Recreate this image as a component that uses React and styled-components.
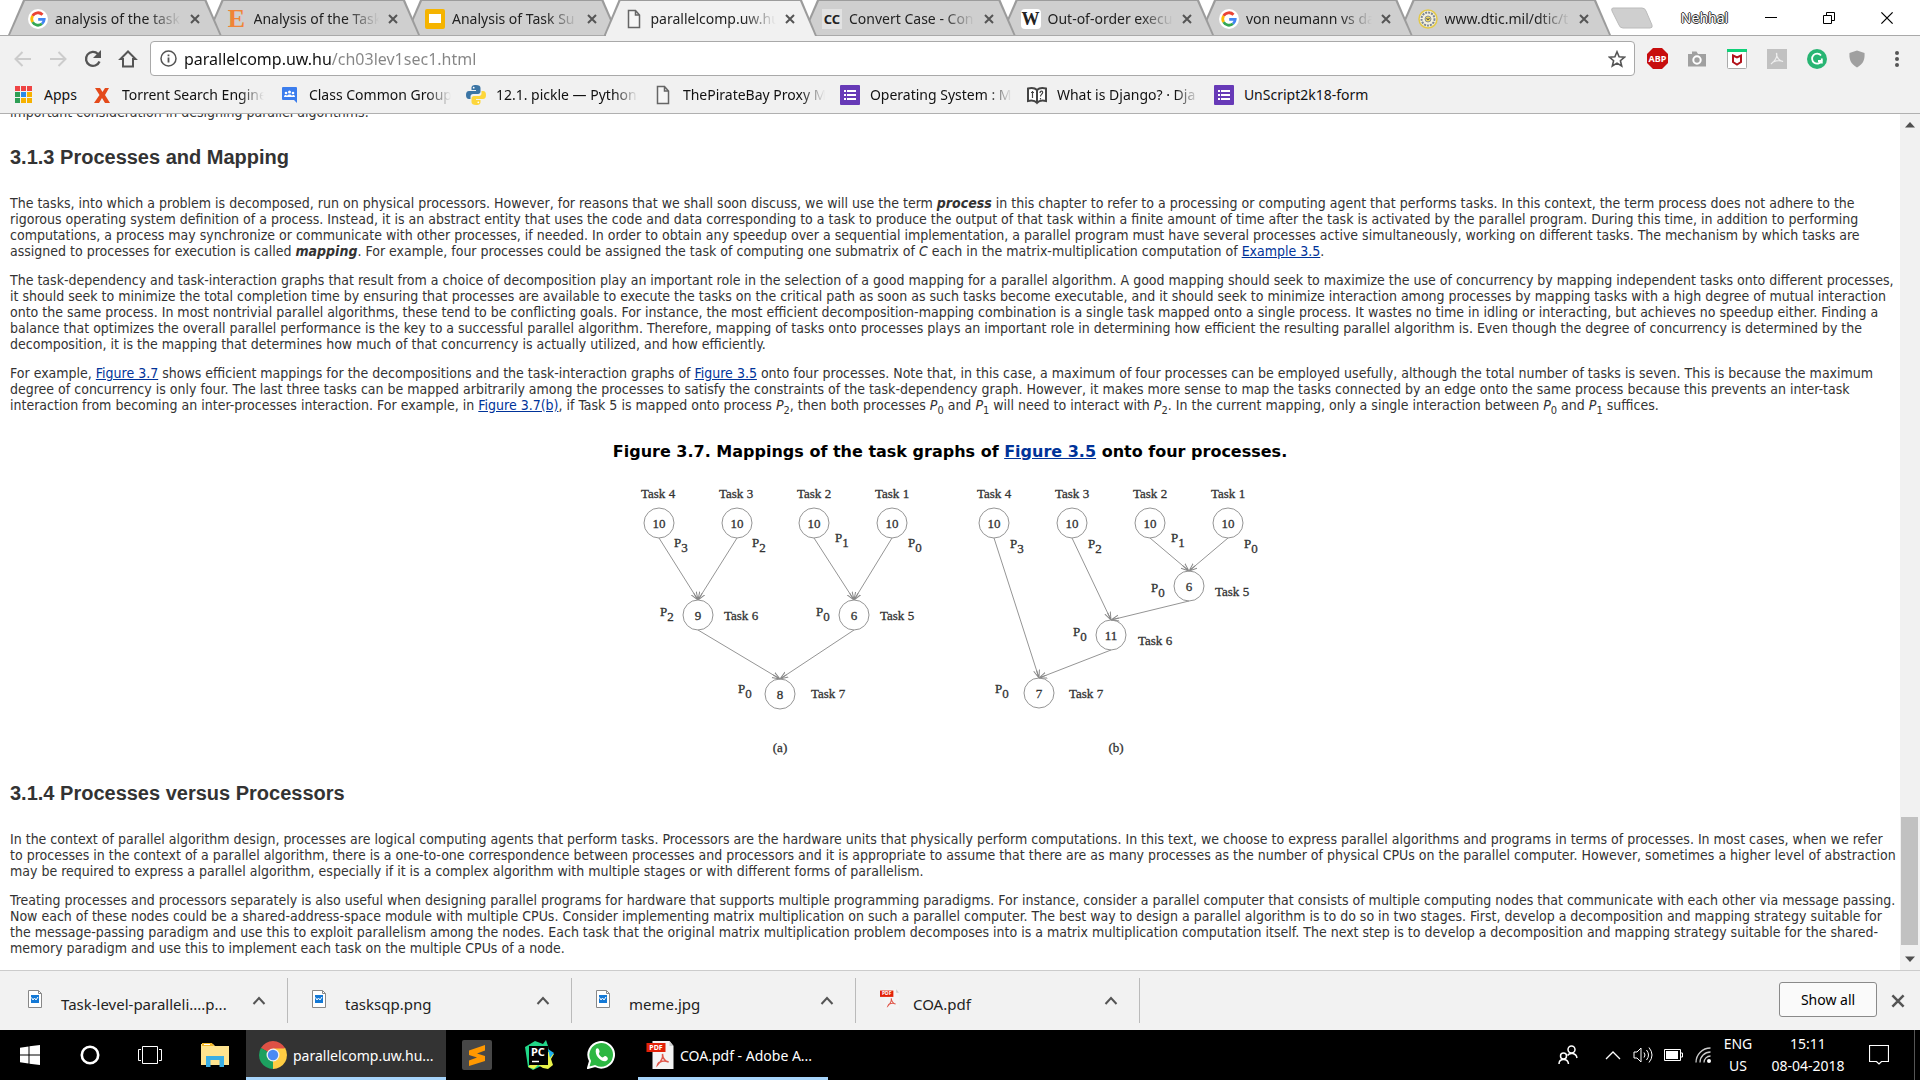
import React from "react";
import styled, { createGlobalStyle } from "styled-components";

const UI = `"Noto Sans", "Open Sans", sans-serif`;

const GlobalStyle = createGlobalStyle`
  * { box-sizing: border-box; }
  body { margin: 0; background: #fff; color: #333; font-family: ${UI}; }
  button { font: inherit; color: inherit; border: 0; padding: 0; background: none; }
  svg { display: block; flex: none; }
`;

const Screen = styled.div`
  display: flex;
  flex-direction: column;
  height: 100vh;
  overflow: hidden;
`;

/* ---------- tab strip ---------- */
const TitleBar = styled.header`
  display: flex;
  height: 36px;
  padding-left: 8px;
  background: #fff;
  border-bottom: 1px solid #a9a9a9;
`;
const TabList = styled.div`
  display: flex;
  flex: 1;
  min-width: 0;
`;
const Tab = styled.div`
  position: relative;
  z-index: ${(p) => (p.$active ? 20 : p.$level)};
  display: flex;
  flex: 1;
  align-items: center;
  gap: 7px;
  min-width: 0;
  height: ${(p) => (p.$active ? 36 : 35)}px;
  padding: 2px 20px 0;
  color: #222;
  font-size: 14px;
  & + & { margin-left: -15px; }
  &::before, &::after {
    content: "";
    position: absolute;
    z-index: -1;
    clip-path: polygon(0 100%, 15px 0, calc(100% - 15px) 0, 100% 100%);
  }
  &::before { inset: 0; background: #9c9c9c; }
  &::after { inset: 1px 2px 0; background: ${(p) => (p.$active ? "#f1f1f1" : "#cfcfcf")}; }
`;
const FadeText = styled.span`
  overflow: hidden;
  white-space: nowrap;
  mask-image: linear-gradient(90deg, #000 calc(100% - 32px), transparent);
`;
const TabTitle = styled(FadeText)`
  flex: 1;
  min-width: 0;
  height: 20px;
  line-height: 20px;
`;
const TabClose = styled.button`
  display: grid;
  place-items: center;
  width: 14px;
  height: 20px;
  color: #555;
`;
const TextBadge = styled.span`
  flex: none;
  width: 20px;
  height: 20px;
  border-radius: ${(p) => (p.$round ? 4 : 0)}px;
  background: ${(p) => p.$bg || "transparent"};
  color: ${(p) => p.$color || "#222"};
  font: ${(p) => p.$font};
  line-height: 20px;
  text-align: center;
`;
const WindowArea = styled.div`
  display: flex;
  flex: none;
  align-items: center;
  width: 309px;
  padding-right: 4px;
`;
const NewTab = styled.button`
  width: 42px;
  height: 22px;
`;
const Profile = styled.span`
  flex: 1;
  padding-left: 14px;
  color: #fff;
  font-size: 14px;
  line-height: 32px;
  text-align: center;
  text-shadow: 1px 0 #333, -1px 0 #333, 0 1px #333, 0 -1px #333;
`;
const WindowButton = styled.button`
  display: grid;
  place-items: center;
  width: 58px;
  height: 34px;
`;

/* ---------- toolbar ---------- */
const Toolbar = styled.div`
  display: flex;
  align-items: center;
  height: 44px;
  padding: 1px 3px 0 5px;
  background: #f1f1f1;
`;
const NavButton = styled.button`
  display: grid;
  place-items: center;
  width: 35px;
  height: 35px;
  color: ${(p) => (p.$off ? "#ccc" : "#555")};
`;
const AddressBox = styled.form`
  display: flex;
  flex: 1;
  align-items: center;
  gap: 7px;
  height: 35px;
  margin: 0 2px 0 5px;
  padding: 0 8px 0 9px;
  border: 1px solid #a9a9a9;
  border-radius: 4px;
  background: #fff;
  color: #555;
`;
const AddressInput = styled.input`
  flex: 1;
  min-width: 0;
  height: 30px;
  padding: 0;
  border: 0;
  outline: 0;
  background: linear-gradient(90deg, #111 148px, #858585 148px);
  background-clip: text;
  color: transparent;
  font: 16px ${UI};
`;
const ExtButton = styled.button`
  display: grid;
  place-items: center;
  width: 40px;
  height: 35px;
`;

const Bookmarks = styled.nav`
  display: flex;
  align-items: center;
  gap: 15px;
  height: 34px;
  padding: 0 15px 4px;
  border-bottom: 1px solid #b0b0b0;
  background: #f1f1f1;
`;
const Bookmark = styled.a`
  display: flex;
  flex: none;
  align-items: center;
  gap: 10px;
  color: #111;
  font-size: 14px;
  line-height: 20px;
  text-decoration: none;
`;
const AppsLink = styled(Bookmark)`
  gap: 12px;
`;
const BookmarkLabel = styled(FadeText)`
  width: ${(p) => (p.$fit ? "auto" : "142px")};
  mask-image: ${(p) => (p.$fit ? "none" : "linear-gradient(90deg, #000 calc(100% - 24px), transparent)")};
`;

/* ---------- page ---------- */
const Viewport = styled.main`
  display: flex;
  flex: 1;
  min-height: 0;
  background: #fff;
`;
const Scroller = styled.div`
  flex: 1;
  min-width: 0;
  overflow: hidden;
`;
const Article = styled.article`
  margin-top: -10px;
  padding: 0 10px;
  font: 14px/16px "DejaVu Sans Condensed", "DejaVu Sans", sans-serif;
  white-space: nowrap;
`;
const P = styled.p`
  margin: 0 0 13px;
  sub { font-size: 11px; line-height: 0; }
`;
const A = styled.a`
  color: #039;
  text-decoration: underline;
`;
const H3 = styled.h3`
  margin: 25px 0 26px;
  font: bold 20px/24px "Liberation Sans", Arial, sans-serif;
`;
const Figure = styled.figure`
  display: flex;
  flex-direction: column;
  align-items: center;
  margin: 29px 0 25px;
`;
const Caption = styled.figcaption`
  color: #000;
  font: bold 16px/20px "DejaVu Sans", Verdana, sans-serif;
`;
const Graph = styled.svg`
  fill: none;
  stroke: #959595;
  text {
    fill: #333;
    stroke: #333;
    stroke-width: 0.3px;
    font: 13px "Liberation Serif", serif;
  }
`;

const ScrollTrack = styled.div`
  display: flex;
  flex-direction: column;
  width: 20px;
  background: #f1f1f1;
`;
const ScrollButton = styled.button`
  display: grid;
  place-items: center;
  height: 22px;
`;
const ScrollSpace = styled.div`
  flex: ${(p) => p.$grow};
`;
const ScrollThumb = styled.div`
  flex: 128;
  margin: 0 2px 0 1px;
  background: #c1c1c1;
`;

/* ---------- downloads ---------- */
const Shelf = styled.section`
  display: flex;
  align-items: center;
  height: 60px;
  padding: 0 15px 0 4px;
  border-top: 1px solid #ccc;
  background: #f2f2f2;
`;
const Download = styled.div`
  display: flex;
  align-items: center;
  width: 284px;
  height: 45px;
  padding: 0 21px 0 24px;
  border-right: 1px solid #bbb;
  color: #222;
`;
const DownloadIcon = styled.span`
  width: 33px;
  padding-bottom: 3px;
`;
const DownloadName = styled.span`
  flex: 1;
  padding-top: 6px;
  font-size: 15px;
  line-height: 20px;
`;
const ShowAll = styled.button`
  width: 98px;
  height: 35px;
  margin: 0 14px 2px auto;
  border: 1px solid #8a8a8a;
  border-radius: 3px;
  background: #fafafa;
  color: #000;
  font-size: 14px;
`;

/* ---------- taskbar ---------- */
const Taskbar = styled.footer`
  display: flex;
  height: 50px;
  background: #000;
  color: #fff;
`;
const TaskIcon = styled.button`
  display: grid;
  place-items: center;
  width: ${(p) => (p.$pinned ? 62 : 60)}px;
`;
const TaskGroup = styled.div`
  display: flex;
  padding-right: ${(p) => p.$after || 0}px;
`;
const TaskWindow = styled.button`
  display: flex;
  align-items: center;
  gap: 6px;
  width: ${(p) => (p.$active ? 200 : 190)}px;
  padding: 3px 0 0 ${(p) => (p.$active ? 13 : 8)}px;
  border-bottom: 3px solid #a6d4fa;
  background: ${(p) => (p.$active ? "#333" : "#000")};
  font-size: 14px;
  white-space: nowrap;
`;
const Tray = styled.div`
  display: flex;
  align-items: center;
  margin-left: auto;
  padding-right: 20px;
`;
const TrayIcon = styled.button`
  display: grid;
  place-items: center;
  width: ${(p) => (p.$wide ? 60 : 30)}px;
  height: 50px;
`;
const TrayText = styled.div`
  width: ${(p) => (p.$wide ? 106 : 40)}px;
  padding-right: ${(p) => (p.$wide ? 6 : 0)}px;
  font-size: 14px;
  line-height: 22px;
  text-align: center;
`;
const ShowDesktop = styled.button`
  width: 6px;
  height: 50px;
  border-left: 1px solid #555;
`;

/* ---------- icons ---------- */
const Svg = ({ s = 20, w, h, box, children, ...rest }) => (
  <svg width={w || s} height={h || s} viewBox={box || `0 0 ${w || s} ${h || s}`} fill="none" aria-hidden="true" {...rest}>
    {children}
  </svg>
);
const Google = () => (
  <Svg box="0 0 20 20">
    <circle cx="10" cy="10" r="10" fill="#fff" />
    <g strokeWidth="2.8">
      <path d="M4.6 6.9A6.2 6.2 0 0 1 14.5 5.7" stroke="#ea4335" />
      <path d="M4.6 6.9a6.2 6.2 0 0 0 0 6.2" stroke="#fbbc05" />
      <path d="M4.6 13.1a6.2 6.2 0 0 0 9.4 1.7" stroke="#34a853" />
      <path d="M14 14.8a6.2 6.2 0 0 0 2.2-4.4H10.2" stroke="#4285f4" />
    </g>
  </Svg>
);
const Slides = () => (
  <Svg>
    <rect width="20" height="20" rx="2" fill="#f5b400" />
    <rect x="4" y="5" width="12" height="9" fill="#fff" />
  </Svg>
);
const PageIcon = () => (
  <Svg>
    <path d="M4.5 1.5h7l4 4.5V18.5h-11zM11.5 1.5V6h4" fill="#f6f6f6" stroke="#666" strokeWidth="1.5" />
  </Svg>
);
const Seal = () => (
  <Svg>
    <circle cx="10" cy="10" r="9" fill="#f4f0dc" stroke="#e3c94a" strokeWidth="1.5" />
    <circle cx="10" cy="10" r="6.5" stroke="#7d8797" strokeWidth="2" strokeDasharray="2 1" />
    <circle cx="10" cy="10" r="3" fill="#e8d35a" stroke="#8a9099" />
    <path d="M8.5 9l1.5 2 1.5-2" stroke="#555" />
  </Svg>
);
const Cross = ({ s = 10, c = "currentColor", t = 2 }) => (
  <Svg s={s} box="0 0 10 10"><path d="M1 1l8 8M9 1L1 9" stroke={c} strokeWidth={t} /></Svg>
);
const AppsIcon = () => (
  <Svg w={17} h={17}>
    {["#ef4444", "#ef4444", "#ef4444", "#2e9e55", "#2b8ae8", "#f6b100", "#2e9e55", "#f6b100", "#f6b100"].map((c, i) => (
      <rect key={i} x={(i % 3) * 6} y={Math.floor(i / 3) * 6} width="5" height="5" fill={c} />
    ))}
  </Svg>
);
const TorrentX = () => (
  <Svg><path d="M3 3h5l2.5 4L13 3h4l-4 7 5 8h-5l-3-5-3 5H2l5.500-8z" fill="#e4491a" /></Svg>
);
const Groups = () => (
  <Svg>
    <path d="M4 2h13a1 1 0 0 1 1 1v15l-3-3H4a1 1 0 0 1-1-1V3a1 1 0 0 1 1-1z" fill="#3b7ded" />
    <g fill="#fff"><circle cx="7" cy="8" r="1.3" /><circle cx="10.5" cy="7" r="1.5" /><circle cx="14" cy="8" r="1.3" /><path d="M5 12c0-3 3-2 3-1 .5-2 4.500-2 5 0 0-1 3-2 3 1z" /></g>
  </Svg>
);
const Python = () => (
  <Svg>
    <path d="M10 0C6 0 5.500 1.500 5.500 3v2H10v1H3C1 6 0 7.500 0 10s1 4 3 4h1.500v-2.500c0-1.500 1-2.500 2.500-2.500h5c1.500 0 2.500-1 2.500-2.500V3c0-2-1.500-3-4.500-3z" fill="#3b75a5" />
    <path d="M10 20c4 0 4.500-1.500 4.500-3v-2H10v-1h7c2 0 3-1.500 3-4s-1-4-3-4h-1.500v2.500c0 1.500-1 2.500-2.500 2.500H8c-1.500 0-2.500 1-2.500 2.500V17c0 2 1.500 3 4.500 3z" fill="#fdd63b" />
    <circle cx="7.7" cy="2.7" r=".9" fill="#fff" /><circle cx="12.3" cy="17.3" r=".9" fill="#fff" />
  </Svg>
);
const Forms = () => (
  <Svg>
    <rect width="20" height="20" rx="1" fill="#673ab7" />
    <path d="M4 6h2M4 10h2M4 14h2M7 6h9M7 10h9M7 14h9" stroke="#fff" strokeWidth="2" />
  </Svg>
);
const Book = () => (
  <Svg>
    <path d="M1 3.500c4-1 7-.5 9 1.500 2-2 5-2.500 9-1.500V16c-4-1-7-.5-9 2-2-2.500-5-3-9-2zM10 5v12" stroke="#444" strokeWidth="2" fill="#fff" />
    <path d="M5.500 6v7M4 7.500h3M13 8c0-3 3.500-2 2.500 0-.5 1.500-2 1.500-2 3.500M13.500 13v1.500" stroke="#444" strokeWidth="1.2" />
  </Svg>
);
const FileImage = () => (
  <Svg w={14} h={18}>
    <path d="M.5.5h10l3 3v14H.5z" fill="#fff" stroke="#888" />
    <path d="M10.5.5v3h3" stroke="#888" />
    <rect x="3" y="5" width="8" height="8" fill="#1479d6" />
    <path d="M3.500 7.500l1.500 2.500 1.500-2 1.500 2 2-3" stroke="#fff" />
  </Svg>
);
const Pdf = ({ w = 20, h = 20 }) => (
  <Svg w={w} h={h} box="0 0 27 28">
    <path d="M6 0h17l4 5v23H6z" fill="#f4f4f4" />
    <path d="M23 0v5h4z" fill="#ccc" />
    <rect y="2" width="19" height="9" fill="#e32108" />
    <text x="9.5" y="9" fontSize="7" fontWeight="bold" fill="#fff" textAnchor="middle" fontFamily="Noto Sans, sans-serif">PDF</text>
    <path d="M16 13c1 5-3 9-5 11 1-4 7-5 11-3-3 0-6-4-6-8z" stroke="#e0574a" strokeWidth="1.5" />
  </Svg>
);
const Chrome = () => (
  <Svg s={28}>
    <path d="M14 14L1.900 7A14 14 0 0 1 26.100 7z" fill="#de5145" />
    <path d="M14 14L26.100 7A14 14 0 0 1 14 28z" fill="#ffcd43" />
    <path d="M14 14v14A14 14 0 0 1 1.900 7z" fill="#1da160" />
    <path d="M14 7.500h12.400L19.600 17.300 14 28l5.600-10.700z" fill="#ffcd43" />
    <path d="M14 28l5.600-10.700H14z" fill="#ffcd43" />
    <path d="M1.900 7l6.500 10.300L14 14z" fill="#1da160" />
    <circle cx="14" cy="14" r="6.5" fill="#f1f1f1" />
    <circle cx="14" cy="14" r="5.2" fill="#4a8af4" />
  </Svg>
);

/* ---------- data ---------- */
const badge = {
  etsy: <TextBadge $color="#f08436" $font={`bold 26px "Liberation Serif", serif`}>E</TextBadge>,
  cc: <TextBadge $bg="#e2e2e2" $font={`bold 13px ${UI}`}>CC</TextBadge>,
  wiki: <TextBadge $round $bg="#fff" $font={`bold 18px "Liberation Serif", serif`}>W</TextBadge>,
};
const TABS = [
  { title: "analysis of the task", icon: <Google /> },
  { title: "Analysis of the Task", icon: badge.etsy },
  { title: "Analysis of Task Su", icon: <Slides /> },
  { title: "parallelcomp.uw.hu", icon: <PageIcon />, active: true },
  { title: "Convert Case - Con", icon: badge.cc },
  { title: "Out-of-order execu", icon: badge.wiki },
  { title: "von neumann vs da", icon: <Google /> },
  { title: "www.dtic.mil/dtic/t", icon: <Seal /> },
];
const BOOKMARKS = [
  ["Torrent Search Engine", <TorrentX />],
  ["Class Common Group", <Groups />],
  ["12.1. pickle — Python", <Python />],
  ["ThePirateBay Proxy M", <PageIcon />],
  ["Operating System : M", <Forms />],
  ["What is Django? · Dja", <Book />],
];
const DOWNLOADS = [
  ["Task-level-paralleli....p...", <FileImage />],
  ["tasksqp.png", <FileImage />],
  ["meme.jpg", <FileImage />],
  ["COA.pdf", <Pdf w={19} h={20} />],
];

const NODES = [
  [659, 523, "10"], [737, 523, "10"], [814, 523, "10"], [892, 523, "10"],
  [698, 615, "9"], [854, 615, "6"], [780, 694, "8"],
  [994, 523, "10"], [1072, 523, "10"], [1150, 523, "10"], [1228, 523, "10"],
  [1189, 586, "6"], [1111, 635, "11"], [1039, 693, "7"],
];
const EDGES = [[0, 4], [1, 4], [2, 5], [3, 5], [4, 6], [5, 6], [9, 11], [10, 11], [8, 12], [11, 12], [7, 13], [12, 13]];
const TASKS = [
  [641, 498, 4], [719, 498, 3], [797, 498, 2], [875, 498, 1], [724, 620, 6], [880, 620, 5], [811, 698, 7],
  [977, 498, 4], [1055, 498, 3], [1133, 498, 2], [1211, 498, 1], [1215, 596, 5], [1138, 645, 6], [1069, 698, 7],
];
const PROCS = [
  [674, 547, 3], [752, 547, 2], [835, 542, 1], [908, 547, 0], [660, 616, 2], [816, 616, 0], [738, 693, 0],
  [1010, 548, 3], [1088, 548, 2], [1171, 542, 1], [1244, 548, 0], [1151, 592, 0], [1073, 636, 0], [995, 693, 0],
];

const TaskGraph = () => (
  <Graph width="640" height="294" viewBox="630 462 640 294" role="img">
    <defs>
      <marker id="tip" viewBox="0 0 8 8" refX="8" refY="4" markerWidth="8" markerHeight="8" orient="auto">
        <path d="M0 1L8 4L0 7M0 4h8" fill="none" stroke="#888" />
      </marker>
    </defs>
    {EDGES.map(([a, b]) => (
      <line key={`${a}-${b}`} x1={NODES[a][0]} y1={NODES[a][1] + 15} x2={NODES[b][0]} y2={NODES[b][1] - 15} markerEnd="url(#tip)" />
    ))}
    {NODES.map(([x, y, n]) => (
      <g key={`${x},${y}`}>
        <circle cx={x} cy={y} r="15" />
        <text x={x} y={y + 5} textAnchor="middle">{n}</text>
      </g>
    ))}
    {TASKS.map(([x, y, n]) => <text key={`${x},${y}`} x={x} y={y}>Task {n}</text>)}
    {PROCS.map(([x, y, n]) => (
      <text key={`${x},${y}`} x={x} y={y}>P<tspan dy="5">{n}</tspan></text>
    ))}
    <text x="780" y="752" textAnchor="middle">(a)</text>
    <text x="1116" y="752" textAnchor="middle">(b)</text>
  </Graph>
);
const Proc = ({ n }) => <><i>P</i><sub>{n}</sub></>;

export default function App() {
  return (
    <Screen>
      <GlobalStyle />
      <TitleBar>
        <TabList>
          {TABS.map((t, i) => (
            <Tab key={t.title} $active={t.active} $level={10 - i}>
              {t.icon}
              <TabTitle>{t.title}</TabTitle>
              <TabClose aria-label="Close tab"><Cross /></TabClose>
            </Tab>
          ))}
        </TabList>
        <WindowArea>
          <NewTab aria-label="New tab">
            <Svg w={42} h={22}><path d="M2 1h29q3 0 4 3l6 14q1 3-2 3H12q-3 0-4-3L1 4q-1-3 1-3z" fill="#cfcfcf" stroke="#bbb" /></Svg>
          </NewTab>
          <Profile>Nehhal</Profile>
          <WindowButton aria-label="Minimize"><Svg s={12}><path d="M0 5.500h12" stroke="#000" /></Svg></WindowButton>
          <WindowButton aria-label="Restore"><Svg s={12}><path d="M.5 3.500h8v8h-8zM3.500 3V.5h8v8H9" stroke="#000" /></Svg></WindowButton>
          <WindowButton aria-label="Close"><Cross s={14} c="#000" t={0.9} /></WindowButton>
        </WindowArea>
      </TitleBar>

      <Toolbar>
        <NavButton $off aria-label="Back"><Svg><path d="M18 10H3M9.500 3L2.500 10l7 7" stroke="currentColor" strokeWidth="2" /></Svg></NavButton>
        <NavButton $off aria-label="Forward"><Svg><path d="M2 10h15M10.500 3l7 7-7 7" stroke="currentColor" strokeWidth="2" /></Svg></NavButton>
        <NavButton aria-label="Reload"><Svg><path d="M16.500 12.500A7 7 0 1 1 15 5" stroke="currentColor" strokeWidth="2.3" /><path d="M18 1v8h-8z" fill="currentColor" /></Svg></NavButton>
        <NavButton aria-label="Home"><Svg><path d="M5 17.500h10V10h2.500L10 2.500 2.500 10H5z" stroke="currentColor" strokeWidth="2" /></Svg></NavButton>
        <AddressBox>
          <Svg s={17}><circle cx="8.5" cy="8.5" r="7.5" stroke="currentColor" strokeWidth="1.5" /><path d="M8.500 7.500v5M8.500 4.500v1.800" stroke="currentColor" strokeWidth="1.8" /></Svg>
          <AddressInput aria-label="Address" defaultValue="parallelcomp.uw.hu/ch03lev1sec1.html" />
          <Svg s={18}><path d="M9 1.800l2.100 5 5.400.4-4.100 3.500 1.300 5.300L9 13.100 4.300 16l1.300-5.300L1.500 7.200l5.400-.4z" stroke="currentColor" strokeWidth="1.6" /></Svg>
        </AddressBox>
        <ExtButton aria-label="Adblock Plus">
          <Svg s={21}><path d="M6 0h9l6 6v9l-6 6H6l-6-6V6z" fill="#c70d0d" /><text x="10.5" y="14" fontSize="9" fontWeight="bold" fill="#fff" textAnchor="middle">ABP</text></Svg>
        </ExtButton>
        <ExtButton aria-label="Screenshot">
          <Svg><path d="M1 5h4V2.500h4.500L11 5h8v12.500H1z" fill="#a0a0a0" /><circle cx="10" cy="11" r="3.7" stroke="#fff" strokeWidth="2" fill="#a0a0a0" /></Svg>
        </ExtButton>
        <ExtButton aria-label="WebAdvisor">
          <Svg><rect x=".5" y=".5" width="19" height="19" rx="1" fill="#fff" stroke="#aaa" /><path d="M0 0h20v3H0z" fill="#10d078" /><path d="M6 6.500l4 2 4-2v6.500l-4 2.500L6 13z" stroke="#b3131b" strokeWidth="2" /></Svg>
        </ExtButton>
        <ExtButton aria-label="Acrobat">
          <Svg><rect width="20" height="20" fill="#c1c1c1" /><path d="M9.500 4c1.500 4-2.500 9-5.500 11 2-3 8-4.500 12-2.500-3 0-7-4-6.500-8.500z" stroke="#eee" strokeWidth="1.2" /></Svg>
        </ExtButton>
        <ExtButton aria-label="Grammarly">
          <Svg><circle cx="10" cy="10" r="10" fill="#28b573" /><path d="M14 6.500A5 5 0 1 0 14.500 12H11M14.800 9.500v5" stroke="#fff" strokeWidth="1.8" /></Svg>
        </ExtButton>
        <ExtButton aria-label="Shield">
          <Svg><path d="M10 1.500l7.500 2.500c.5 6-1 11-7.500 14.500C3.500 15 2 10 2.500 4z" fill="#a0a0a0" /></Svg>
        </ExtButton>
        <ExtButton aria-label="Menu">
          <Svg s={18}><g fill="#555"><circle cx="9" cy="3" r="2" /><circle cx="9" cy="9" r="2" /><circle cx="9" cy="15" r="2" /></g></Svg>
        </ExtButton>
      </Toolbar>

      <Bookmarks>
        <AppsLink href="#apps"><AppsIcon /><BookmarkLabel $fit>Apps</BookmarkLabel></AppsLink>
        {BOOKMARKS.map(([label, icon]) => (
          <Bookmark key={label} href="#bookmark">{icon}<BookmarkLabel>{label}</BookmarkLabel></Bookmark>
        ))}
        <Bookmark href="#bookmark"><Forms /><BookmarkLabel $fit>UnScript2k18-form</BookmarkLabel></Bookmark>
      </Bookmarks>

      <Viewport>
        <Scroller>
          <Article>
            <P>important consideration in designing parallel algorithms.</P>
            <H3>3.1.3 Processes and Mapping</H3>
            <P>
              The tasks, into which a problem is decomposed, run on physical processors. However, for reasons that we shall soon discuss, we will use the term <b><i>process</i></b> in this chapter to refer to a processing or computing agent that performs tasks. In this context, the term process does not adhere to the<br />
              rigorous operating system definition of a process. Instead, it is an abstract entity that uses the code and data corresponding to a task to produce the output of that task within a finite amount of time after the task is activated by the parallel program. During this time, in addition to performing<br />
              computations, a process may synchronize or communicate with other processes, if needed. In order to obtain any speedup over a sequential implementation, a parallel program must have several processes active simultaneously, working on different tasks. The mechanism by which tasks are<br />
              assigned to processes for execution is called <b><i>mapping</i></b>. For example, four processes could be assigned the task of computing one submatrix of <i>C</i> each in the matrix-multiplication computation of <A href="#ex35">Example 3.5</A>.
            </P>
            <P>
              The task-dependency and task-interaction graphs that result from a choice of decomposition play an important role in the selection of a good mapping for a parallel algorithm. A good mapping should seek to maximize the use of concurrency by mapping independent tasks onto different processes,<br />
              it should seek to minimize the total completion time by ensuring that processes are available to execute the tasks on the critical path as soon as such tasks become executable, and it should seek to minimize interaction among processes by mapping tasks with a high degree of mutual interaction<br />
              onto the same process. In most nontrivial parallel algorithms, these tend to be conflicting goals. For instance, the most efficient decomposition-mapping combination is a single task mapped onto a single process. It wastes no time in idling or interacting, but achieves no speedup either. Finding a<br />
              balance that optimizes the overall parallel performance is the key to a successful parallel algorithm. Therefore, mapping of tasks onto processes plays an important role in determining how efficient the resulting parallel algorithm is. Even though the degree of concurrency is determined by the<br />
              decomposition, it is the mapping that determines how much of that concurrency is actually utilized, and how efficiently.
            </P>
            <P>
              For example, <A href="#fig37">Figure 3.7</A> shows efficient mappings for the decompositions and the task-interaction graphs of <A href="#fig35">Figure 3.5</A> onto four processes. Note that, in this case, a maximum of four processes can be employed usefully, although the total number of tasks is seven. This is because the maximum<br />
              degree of concurrency is only four. The last three tasks can be mapped arbitrarily among the processes to satisfy the constraints of the task-dependency graph. However, it makes more sense to map the tasks connected by an edge onto the same process because this prevents an inter-task<br />
              interaction from becoming an inter-processes interaction. For example, in <A href="#fig37">Figure 3.7(b)</A>, if Task 5 is mapped onto process <Proc n={2} />, then both processes <Proc n={0} /> and <Proc n={1} /> will need to interact with <Proc n={2} />. In the current mapping, only a single interaction between <Proc n={0} /> and <Proc n={1} /> suffices.
            </P>
            <Figure>
              <Caption>Figure 3.7. Mappings of the task graphs of <A href="#fig35">Figure 3.5</A> onto four processes.</Caption>
              <TaskGraph />
            </Figure>
            <H3>3.1.4 Processes versus Processors</H3>
            <P>
              In the context of parallel algorithm design, processes are logical computing agents that perform tasks. Processors are the hardware units that physically perform computations. In this text, we choose to express parallel algorithms and programs in terms of processes. In most cases, when we refer<br />
              to processes in the context of a parallel algorithm, there is a one-to-one correspondence between processes and processors and it is appropriate to assume that there are as many processes as the number of physical CPUs on the parallel computer. However, sometimes a higher level of abstraction<br />
              may be required to express a parallel algorithm, especially if it is a complex algorithm with multiple stages or with different forms of parallelism.
            </P>
            <P>
              Treating processes and processors separately is also useful when designing parallel programs for hardware that supports multiple programming paradigms. For instance, consider a parallel computer that consists of multiple computing nodes that communicate with each other via message passing.<br />
              Now each of these nodes could be a shared-address-space module with multiple CPUs. Consider implementing matrix multiplication on such a parallel computer. The best way to design a parallel algorithm is to do so in two stages. First, develop a decomposition and mapping strategy suitable for<br />
              the message-passing paradigm and use this to exploit parallelism among the nodes. Each task that the original matrix multiplication problem decomposes into is a matrix multiplication computation itself. The next step is to develop a decomposition and mapping strategy suitable for the shared-<br />
              memory paradigm and use this to implement each task on the multiple CPUs of a node.
            </P>
          </Article>
        </Scroller>
        <ScrollTrack>
          <ScrollButton aria-label="Scroll up"><Svg w={10} h={6}><path d="M0 5.500L5 0l5 5.500z" fill="#505050" /></Svg></ScrollButton>
          <ScrollSpace $grow={681} />
          <ScrollThumb />
          <ScrollSpace $grow={3} />
          <ScrollButton aria-label="Scroll down"><Svg w={10} h={6}><path d="M0 .5h10L5 6z" fill="#505050" /></Svg></ScrollButton>
        </ScrollTrack>
      </Viewport>

      <Shelf>
        {DOWNLOADS.map(([name, icon]) => (
          <Download key={name}>
            <DownloadIcon>{icon}</DownloadIcon>
            <DownloadName>{name}</DownloadName>
            <button aria-label="Options"><Svg w={14} h={9}><path d="M1.500 8L7 2l5.500 6" stroke="#555" strokeWidth="2" /></Svg></button>
          </Download>
        ))}
        <ShowAll>Show all</ShowAll>
        <button aria-label="Close downloads"><Cross s={14} c="#555" t={1.8} /></button>
      </Shelf>

      <Taskbar>
        <TaskGroup $after={4}>
          <TaskIcon aria-label="Start"><Svg><path d="M0 2.800L8.500 1.500v8H0zM9.500 1.300L20 0v9.500H9.500zM0 10.500h8.500v8L0 17.200zM9.500 10.500H20V20L9.500 18.700z" fill="#fff" /></Svg></TaskIcon>
          <TaskIcon aria-label="Search"><Svg><circle cx="10" cy="10" r="8.2" stroke="#fff" strokeWidth="2.6" /></Svg></TaskIcon>
          <TaskIcon aria-label="Task view"><Svg w={24} h={18}><path d="M4.500.5h15v17h-15zM3 3.500H.5v11H3M21 3.500h2.500v11H21" stroke="#fff" /></Svg></TaskIcon>
        </TaskGroup>
        <TaskIcon $pinned aria-label="File Explorer">
          <Svg w={28} h={24}><path d="M0 1h12l2 2h14v19H0z" fill="#ffe48f" /><path d="M1 0h10l2 3H1z" fill="#f3b92a" /><path d="M3 1.500h6" stroke="#fff" /><path d="M5 24V13h18v11h-4.500v-7h-9v7z" fill="#3aaee4" /></Svg>
        </TaskIcon>
        <TaskWindow $active><Chrome />parallelcomp.uw.hu...</TaskWindow>
        <TaskIcon $pinned aria-label="Sublime Text">
          <Svg s={30}><rect width="30" height="30" rx="2" fill="#474747" /><path d="M7 10.500L23 5v5.500l-8 3 8 2.500v5L7 26v-5.500l8-3-8-2.500z" fill="#ff9800" /></Svg>
        </TaskIcon>
        <TaskIcon $pinned aria-label="PyCharm">
          <Svg s={30}><path d="M1 7l10-6 8 3 3-4 2 6 1 8-4 10-12 6L4 27z" fill="#21d789" /><path d="M22 11l8 3-3 5 2 6-5 4-5-1-5-3-4 4-6-2 10-10z" fill="#e9f24a" /><path d="M24 9l6 4-4 5z" fill="#1cb0f0" /><rect x="5" y="6" width="19" height="19" fill="#000" /><text x="7" y="16" fontSize="11" fontWeight="bold" fill="#fff">PC</text><path d="M8 21.500h7" stroke="#fff" strokeWidth="1.5" /></Svg>
        </TaskIcon>
        <TaskGroup $after={6}>
          <TaskIcon $pinned aria-label="WhatsApp">
            <Svg s={28}><path d="M1 27l2-7a12.800 12.800 0 1 1 5 5z" fill="#2cb742" stroke="#fff" strokeWidth="2" /><path d="M9 8c2-2 3 0 3.500 2s-1.500 2 0 4 3 3 4 2 2-1.500 3.500 0 1 3-1 4c-4 1.500-12-5-10-12z" fill="#fff" /></Svg>
          </TaskIcon>
        </TaskGroup>
        <TaskWindow><Pdf w={28} h={28} />COA.pdf - Adobe A...</TaskWindow>
        <Tray>
          <TrayIcon $wide aria-label="People">
            <Svg s={20}><g stroke="#fff" strokeWidth="1.5"><circle cx="13.5" cy="4.5" r="3.5" /><circle cx="5.5" cy="11" r="3" /><path d="M1 19c0-6 9-6 9.500 0M9.500 10.500c2-3 8.500-3 9.500 2.500" /></g></Svg>
          </TrayIcon>
          <TrayIcon aria-label="Hidden icons"><Svg w={16} h={10}><path d="M1 9l7-7 7 7" stroke="#fff" strokeWidth="1.3" /></Svg></TrayIcon>
          <TrayIcon aria-label="Volume"><Svg><path d="M1 7h3l4-4v14l-4-4H1z" stroke="#fff" /><path d="M11 7.500q2 2.500 0 5M13.500 5q4 5 0 10M16 2.500q6 7.500 0 15" stroke="#fff" /></Svg></TrayIcon>
          <TrayIcon aria-label="Battery"><Svg w={19} h={12}><path d="M.5.5h16v11H.5zM17 4h1.500v4H17" stroke="#fff" /><path d="M2 2h12v8H2z" fill="#fff" /></Svg></TrayIcon>
          <TrayIcon aria-label="Network"><Svg s={16}><g stroke="#ccc" strokeWidth="1.3"><path d="M1 15.500A14.500 14.500 0 0 1 15.500 1M5 15.500A10.500 10.500 0 0 1 15.500 5M9 15.500A6.500 6.500 0 0 1 15.500 9" /></g><circle cx="14" cy="14" r="2" fill="#fff" /></Svg></TrayIcon>
          <TrayText>ENG<br />US</TrayText>
          <TrayText $wide>15:11<br />08-04-2018</TrayText>
          <TrayIcon aria-label="Notifications"><Svg><path d="M.5.5h19v16h-7L10 19l-2.500-2.500h-7z" stroke="#fff" strokeWidth="1.2" /></Svg></TrayIcon>
        </Tray>
        <ShowDesktop aria-label="Show desktop" />
      </Taskbar>
    </Screen>
  );
}
